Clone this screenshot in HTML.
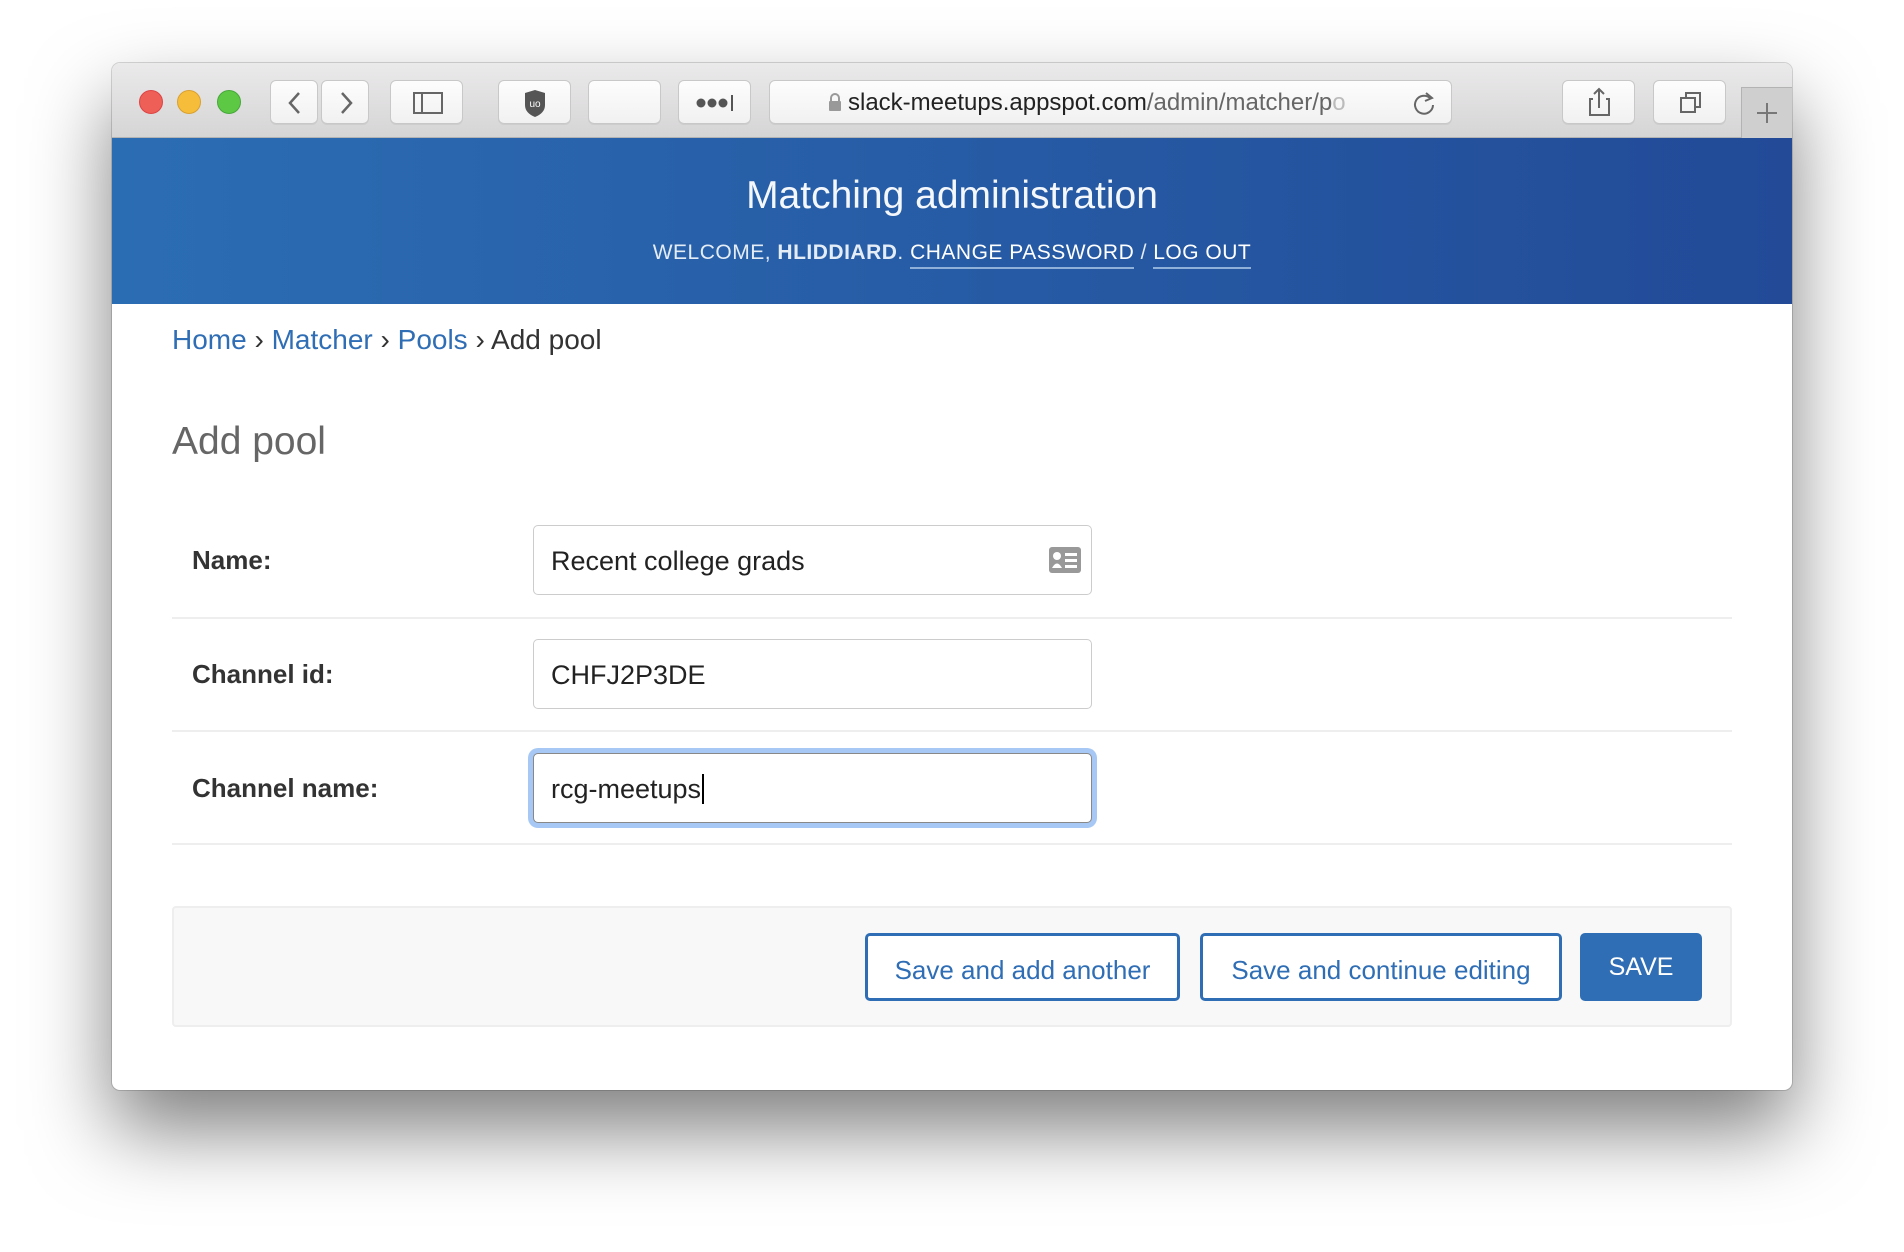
<!DOCTYPE html>
<html><head><meta charset="utf-8"><style>
*{box-sizing:border-box;margin:0;padding:0}
body{width:1904px;height:1252px;background:#fff;position:relative;overflow:hidden;font-family:"Liberation Sans",Arial,sans-serif}
.win{position:absolute;left:112px;top:63px;width:1680px;height:1027px;border-radius:8px;background:#fff;box-shadow:0 40px 80px rgba(0,0,0,.5),0 0 0 1px rgba(0,0,0,.15);overflow:hidden}
.tb{position:absolute;left:0;top:0;width:1680px;height:75px;background:linear-gradient(#ebeaeb,#d6d5d6);border-bottom:1px solid #b3b3b3}
.dot{position:absolute;top:27px;width:24px;height:24px;border-radius:50%}
.btn{position:absolute;top:17px;height:44px;background:linear-gradient(#fdfdfd,#f1f1f1);border:1px solid #c8c8c8;border-radius:6px;box-shadow:0 1px 0 rgba(0,0,0,.05)}
.hdr{position:absolute;left:0;top:75px;width:1680px;height:166px;background:linear-gradient(90deg,#2b6db3,#224a97);color:#fff;text-align:center}
.in{position:absolute;left:421px;width:559px;height:70px;border:1.5px solid #ccc;border-radius:5px;font-size:27px;color:#222;padding:20px 17px;background:#fff}
.lab{position:absolute;left:80px;font-size:26px;font-weight:bold;color:#333}
.sep{position:absolute;left:60px;width:1560px;height:2px;background:#eee}
.sb{position:absolute;top:870px;height:68px;border:3px solid #2f6eb5;border-radius:5px;color:#2f6eb5;font-size:26px;text-align:center;line-height:68px;background:#fff}
</style></head><body>
<div class="win">
 <div class="tb">
  <div class="dot" style="left:27px;background:#ee5f57;border:1px solid #d44"></div>
  <div class="dot" style="left:65px;background:#f6bd3b;border:1px solid #d9a030"></div>
  <div class="dot" style="left:105px;background:#5dc844;border:1px solid #46a83a"></div>
  <div class="btn" style="left:158px;width:48px"><svg width="48" height="44"><path d="M28 12 L19 22 L28 32" stroke="#666" stroke-width="2.5" fill="none"/></svg></div>
  <div class="btn" style="left:209px;width:48px"><svg width="48" height="44"><path d="M20 12 L29 22 L20 32" stroke="#666" stroke-width="2.5" fill="none"/></svg></div>
  <div class="btn" style="left:278px;width:73px"><svg width="73" height="44"><rect x="23" y="12" width="28" height="20" stroke="#666" stroke-width="2" fill="none"/><line x1="31" y1="12" x2="31" y2="32" stroke="#666" stroke-width="2"/></svg></div>
  <div class="btn" style="left:386px;width:73px"><svg width="73" height="44"><path d="M26 12 L36 9 L46 12 L46 24 Q46 32 36 36 Q26 32 26 24Z" fill="#555"/><text x="36" y="26" font-size="10" fill="#fff" text-anchor="middle" font-family="Liberation Sans">uo</text></svg></div>
  <div class="btn" style="left:476px;width:73px"></div>
  <div class="btn" style="left:566px;width:73px"><svg width="73" height="44"><circle cx="22" cy="22" r="4.5" fill="#555"/><circle cx="33" cy="22" r="4.5" fill="#555"/><circle cx="44" cy="22" r="4.5" fill="#555"/><rect x="52" y="14" width="2" height="16" fill="#555"/></svg></div>
  <div class="btn" style="left:657px;width:683px;font-size:24px;color:#222;line-height:44px;padding-left:78px">
   <svg style="position:absolute;left:58px;top:12px" width="14" height="18"><path d="M3 8 V5 a4 4 0 0 1 8 0 V8" stroke="#999" stroke-width="2" fill="none"/><rect x="1" y="8" width="12" height="10" rx="1" fill="#999"/></svg>slack-meetups.appspot.com<span style="color:#666">/admin/matcher/p</span><span style="color:#bbb">o</span>
   <svg style="position:absolute;right:14px;top:9px" width="26" height="26"><path d="M19 8 A9 9 0 1 0 22 15" stroke="#666" stroke-width="2" fill="none"/><path d="M15 3 L21 8 L14 11" stroke="#666" stroke-width="2" fill="none"/></svg></div>
  <div class="btn" style="left:1450px;width:73px"><svg width="73" height="44"><path d="M30 18 H27 V34 H46 V18 H43" stroke="#666" stroke-width="2" fill="none"/><path d="M36 27 V8 M31 13 L36 8 L41 13" stroke="#666" stroke-width="2" fill="none"/></svg></div>
  <div class="btn" style="left:1541px;width:73px"><svg width="73" height="44"><rect x="27" y="17" width="14" height="14" stroke="#666" stroke-width="2" fill="none"/><path d="M32 17 V12 H46 V26 H41" stroke="#666" stroke-width="2" fill="none"/></svg></div>
  <div style="position:absolute;left:1629px;top:24px;width:51px;height:51px;background:#d0cfd0;border-left:1px solid #b3b3b3;border-top:1px solid #b3b3b3"><svg width="51" height="51"><path d="M25 15 V35 M15 25 H35" stroke="#777" stroke-width="2"/></svg></div>
 </div>
 <div class="hdr">
  <div style="position:absolute;top:36px;width:100%;font-size:39px;font-weight:300;color:#f4f7fb">Matching administration</div>
  <div style="position:absolute;top:103px;width:100%;font-size:21px;letter-spacing:.5px;color:#e4ecf6">WELCOME, <b>HLIDDIARD</b>. <span style="border-bottom:2px solid #8fb0d8;padding-bottom:3px;color:#fff">CHANGE PASSWORD</span> / <span style="border-bottom:2px solid #8fb0d8;padding-bottom:3px;color:#fff">LOG OUT</span></div>
 </div>
 <div style="position:absolute;left:60px;top:261px;font-size:28px;color:#333"><span style="color:#2f6eb5">Home</span> › <span style="color:#2f6eb5">Matcher</span> › <span style="color:#2f6eb5">Pools</span> › Add pool</div>
 <div style="position:absolute;left:60px;top:357px;font-size:39px;color:#666;font-weight:300">Add pool</div>
 <div class="lab" style="top:482px">Name:</div>
 <div class="in" style="top:462px">Recent college grads<svg style="position:absolute;right:10px;top:21px" width="32" height="26"><rect width="32" height="26" rx="3" fill="#999"/><circle cx="8" cy="9" r="4" fill="#fff"/><path d="M3 21 Q8 12 13 21Z" fill="#fff"/><rect x="16" y="6" width="12" height="3" fill="#fff"/><rect x="16" y="12" width="12" height="3" fill="#fff"/><rect x="16" y="18" width="12" height="3" fill="#fff"/></svg></div>
 <div class="sep" style="top:554px"></div>
 <div class="lab" style="top:596px">Channel id:</div>
 <div class="in" style="top:576px">CHFJ2P3DE</div>
 <div class="sep" style="top:667px"></div>
 <div class="lab" style="top:710px">Channel name:</div>
 <div class="in" style="top:690px;border-color:#888;box-shadow:0 0 0 5px #a7c8f4">rcg-meetups<span style="border-left:2px solid #000;margin-left:1px"></span></div>
 <div class="sep" style="top:780px"></div>
 <div style="position:absolute;left:60px;top:843px;width:1560px;height:121px;background:#f8f8f8;border:2px solid #eee;border-radius:4px"></div>
 <div class="sb" style="left:753px;width:315px">Save and add another</div>
 <div class="sb" style="left:1088px;width:362px">Save and continue editing</div>
 <div class="sb" style="left:1468px;width:122px;background:#2f6eb5;color:#fff;font-size:25px;line-height:62px">SAVE</div>
</div>
</body></html>
